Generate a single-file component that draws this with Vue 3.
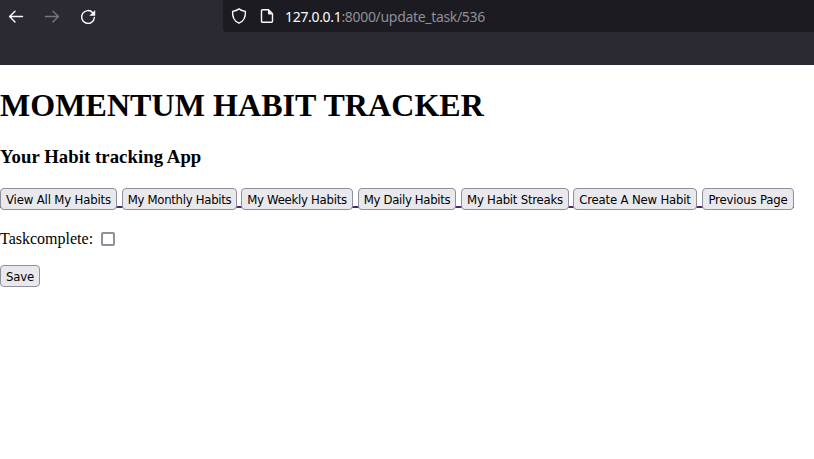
<script setup>
const links = [
  { label: 'View All My Habits', width: 117, gap: 5, tracking: -0.15 },
  { label: 'My Monthly Habits', width: 115, gap: 4, tracking: -0.29 },
  { label: 'My Weekly Habits', width: 112, gap: 5, tracking: -0.27 },
  { label: 'My Daily Habits', width: 98, gap: 5, tracking: -0.33 },
  { label: 'My Habit Streaks', width: 108, gap: 4, tracking: -0.22 },
  { label: 'Create A New Habit', width: 124, gap: 5, tracking: -0.18 },
  { label: 'Previous Page', width: 92, gap: 0, tracking: -0.17 },
]
</script>

<template>
  <div class="window">
    <header class="toolbar">
      <nav class="controls">
        <svg class="icon" viewBox="0 0 16 16"><path d="M14.500 7.500H1.800M7 2.200L1.600 7.500L7 13" /></svg>
        <svg class="icon dim" viewBox="0 0 16 16"><path d="M1.500 7.500h12.700M9 2.200l5.400 5.300L9 13" /></svg>
        <svg class="icon" viewBox="0 0 16 16"><path d="M12.800 3.700A6.400 6.400 0 1 0 14.400 8.500" /><path class="solid" d="M15.200 1v5.300a.5.5 0 0 1-.5.5H9.300z" /></svg>
      </nav>
      <div class="address">
        <svg class="icon" viewBox="0 0 16 16"><path d="M8 .9C6.2 2.200 4 3 1.600 3.400C1.300 8.600 3.300 13.300 8 15.200C12.700 13.300 14.700 8.600 14.400 3.400C12 3 9.800 2.200 8 .9z" /></svg>
        <svg class="icon page-icon" viewBox="0 0 16 16"><path d="M3.500 1.700h6l4 4v7.600a1 1 0 0 1-1 1h-9a1 1 0 0 1-1-1V2.700a1 1 0 0 1 1-1z" /><path class="solid" d="M9 1.500l5 5H10a1 1 0 0 1-1-1z" /></svg>
        <span class="url"><b>127.0.0.1</b>:8000/update_task/536</span>
      </div>
    </header>
    <main>
      <h1>MOMENTUM HABIT TRACKER</h1>
      <h3>Your Habit tracking App</h3>
      <div class="links">
        <a v-for="l in links" :key="l.label" :style="{ paddingRight: l.gap + 'px' }">
          <button :style="{ width: l.width + 'px', letterSpacing: l.tracking + 'px' }">{{ l.label }}</button>
        </a>
      </div>
      <label class="field">Taskcomplete:<input type="checkbox" /></label>
      <button class="save">Save</button>
    </main>
  </div>
</template>

<style>
body { background: #fff; overflow: hidden; }
</style>

<style scoped>
.window { height: 459px; overflow: hidden; }
.toolbar { height: 65px; background: #2b2a33; display: flex; align-items: flex-start; }
.controls { display: flex; gap: 20px; width: 223px; padding: 9px 0 0 8px; box-sizing: border-box; }
.icon { width: 16px; height: 16px; flex: none; fill: none; stroke: #fbfbfe; stroke-width: 1.4; stroke-linecap: round; stroke-linejoin: round; }
.dim { stroke: #77767e; }
.icon .solid { fill: #fbfbfe; stroke: none; }
.address { flex: 1; height: 32px; box-sizing: border-box; padding: 0 0 0 8px; background: #1c1b22; border-radius: 0 0 0 4px; display: flex; align-items: center; }
.page-icon { margin-left: 12px; }
.url { margin-left: 10px; padding-top: 2px; font: 14px/20px "Noto Sans", sans-serif; letter-spacing: -0.32px; color: #8f8f96; white-space: nowrap; }
.url b { color: #fbfbfe; font-weight: 400; }
main { color: #000; font-family: "Liberation Serif", serif; font-size: 16px; }
h1 { margin: 0; padding-top: 22px; font-size: 32px; line-height: 37px; letter-spacing: 0.07px; }
h3 { margin: 22px 0 0; font-size: 18.72px; line-height: 22px; letter-spacing: 0.07px; }
.links { display: flex; margin-top: 20px; }
.links a { display: flex; flex: none; background: linear-gradient(#4c2478, #4c2478) 0 18px / 100% 2px no-repeat; }
button { flex: none; height: 22px; box-sizing: border-box; border: 1px solid #8f8f9d; border-radius: 4px; background: #e9e9ed; color: #000; padding: 0; font: 13px/19px "DejaVu Sans Condensed", "DejaVu Sans", sans-serif; font-stretch: condensed; letter-spacing: -0.2px; white-space: nowrap; text-align: center; }
.field { display: flex; align-items: center; height: 20px; margin-top: 19px; }
.field input { appearance: none; box-sizing: border-box; width: 14px; height: 14px; margin: 0 0 0 8px; border: 2px solid #8f8f9d; border-radius: 2px; background: #fff; }
.save { display: block; width: 40px; margin-top: 16px; }
</style>
